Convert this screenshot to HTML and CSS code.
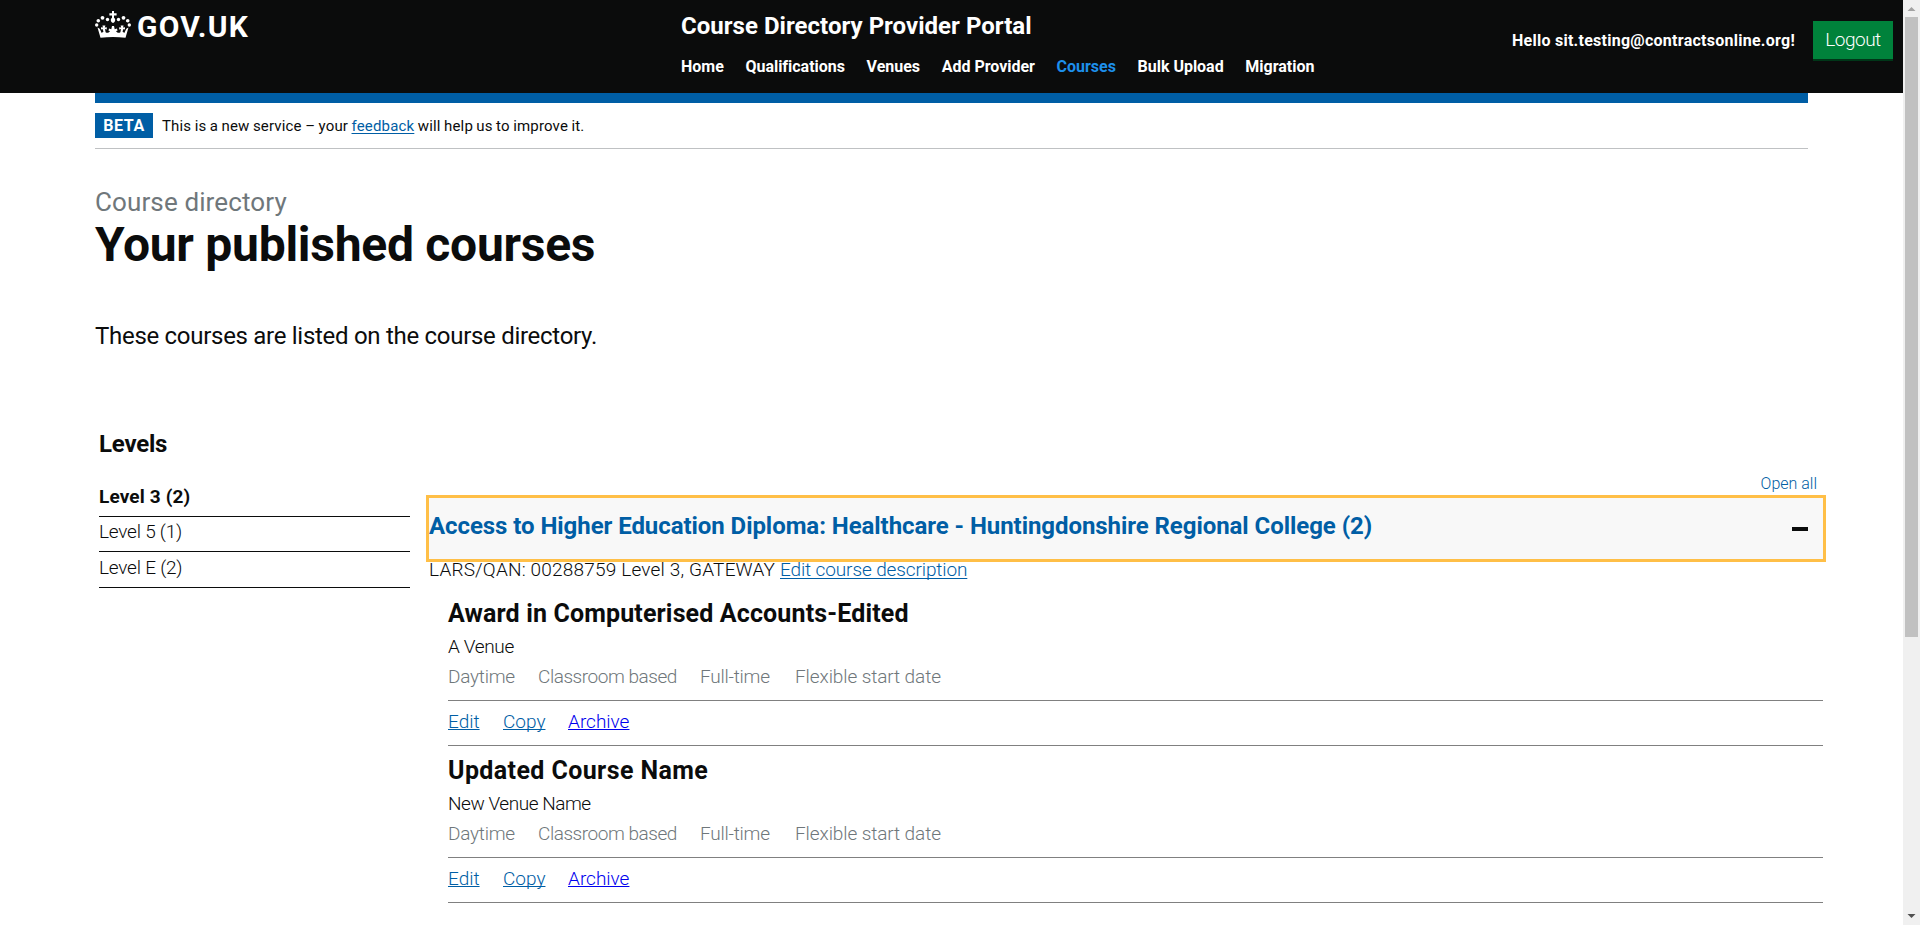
FILE: index.html
```html
<!DOCTYPE html>
<html lang="en">
<head>
<meta charset="utf-8">
<title>Your published courses</title>
<link rel="stylesheet" href="styles.css">
</head>
<body>
<div class="page">
  <header class="header">
    <a class="logo">
      <svg class="crown" viewBox="0 0 36 27" width="36" height="27" fill="#fff">
        <path d="M17 0h2v2.200h2.600v2.200H19v2.400c1.800 1.200 1.600 3.400-.2 5h-1.600c-1.800-1.600-2-3.800-.2-5V4.400h-2.600V2.200H17z"/>
        <circle cx="12.500" cy="8.500" r="1.700"/><circle cx="23.500" cy="8.500" r="1.700"/>
        <circle cx="7.500" cy="6.800" r="1.900"/><circle cx="28.500" cy="6.800" r="1.900"/>
        <circle cx="3.300" cy="9.800" r="1.800"/><circle cx="32.700" cy="9.800" r="1.800"/>
        <circle cx="1.700" cy="14" r="1.700"/><circle cx="34.300" cy="14" r="1.700"/>
        <path d="M2.500 16.500l2.200 1.200 2 4.300 1.800-1.500-1-2.500-1.500.5v-2.200l2 .3-.6-2h3l-.6 2 2-.3v2.200l-1.800-.5.600 3.200c1.500 1.300 3.600.6 4.400-1.200l-1.500-.2.500-2.300 2.300.8.700-3.300h2l.7 3.300 2.300-.8.500 2.300-1.500.2c.8 1.800 2.900 2.500 4.400 1.200l.6-3.200-1.800.5v-2.200l2 .3-.6-2h3l-.6 2 2-.3v2.200l-1.500-.5-1 2.500 1.800 1.500 2-4.300 2.200-1.200-3 10.300C22 25.600 14 25.600 5.500 26.800z"/>
      </svg>
      <span class="logo-text">GOV.UK</span>
    </a>
    <div class="service">
      <div class="service-name">Course Directory Provider Portal</div>
      <nav class="nav"><a>Home</a><a>Qualifications</a><a>Venues</a><a>Add Provider</a><a class="active">Courses</a><a>Bulk Upload</a><a>Migration</a></nav>
    </div>
    <div class="user">
      <span class="hello">Hello sit.testing@contractsonline.org!</span>
      <a class="logout">Logout</a>
    </div>
  </header>
  <div class="container">
    <div class="bar"></div>
    <div class="phase">
      <strong class="tag">BETA</strong>
      <span class="phase-text">This is a new service – your <a class="link">feedback</a> will help us to improve it.</span>
    </div>
    <div class="caption">Course directory</div>
    <h1 class="title">Your published courses</h1>
    <p class="lead">These courses are listed on the course directory.</p>
    <div class="columns">
      <aside class="levels">
        <h2 class="levels-title">Levels</h2>
        <ul class="levels-list">
          <li class="level current">Level 3 (2)</li>
          <li class="level">Level 5 (1)</li>
          <li class="level last">Level E (2)</li>
        </ul>
      </aside>
      <section class="courses">
        <a class="open-all">Open all</a>
        <div class="accordion">
          <h2 class="accordion-title">Access to Higher Education Diploma: Healthcare - Huntingdonshire Regional College (2)</h2>
          <span class="minus"></span>
        </div>
        <div class="summary"><span class="lars">LARS/QAN: 00288759 Level 3, GATEWAY</span><a class="link">Edit course description</a></div>
        <article class="course">
          <h3 class="course-title">Award in Computerised Accounts-Edited</h3>
          <div class="venue short">A Venue</div>
          <div class="tags"><span>Daytime</span><span class="tight">Classroom based</span><span>Full-time</span><span class="wide">Flexible start date</span></div>
          <div class="actions"><a class="link">Edit</a><a class="link">Copy</a><a class="link archive">Archive</a></div>
        </article>
        <article class="course">
          <h3 class="course-title loose">Updated Course Name</h3>
          <div class="venue">New Venue Name</div>
          <div class="tags"><span>Daytime</span><span class="tight">Classroom based</span><span>Full-time</span><span class="wide">Flexible start date</span></div>
          <div class="actions"><a class="link">Edit</a><a class="link">Copy</a><a class="link archive">Archive</a></div>
        </article>
      </section>
    </div>
  </div>
</div>
<div class="scrollbar">
  <svg width="17" height="17"><path fill="#a3a3a3" d="M8.500 7l4 4h-8z"/></svg>
  <div class="thumb"></div>
  <svg class="down" width="17" height="17"><path fill="#505050" d="M8.500 10l4-4h-8z"/></svg>
</div>
</body>
</html>
```

FILE: styles.css
```css
* { box-sizing: border-box; }
body {
  margin: 0;
  height: 925px;
  overflow: hidden;
  display: flex;
  background: #fff;
  color: #0b0c0c;
  font-family: Roboto, "Liberation Sans", sans-serif;
}
h1, h2, h3, p, ul { margin: 0; padding: 0; }
.page { flex: 1; min-width: 0; height: 925px; overflow: hidden; }

.header { display: flex; height: 93px; padding: 11px 10px 0 95px; background: #0b0c0c; color: #fff; }
.logo { display: flex; width: 586px; }
.crown { flex: none; }
.logo-text { margin-left: 6px; font-size: 30px; line-height: 32px; font-weight: 700; letter-spacing: 1.2px; }
.service-name { font-size: 24px; line-height: 30px; font-weight: 700; letter-spacing: .03px; }
.nav { display: flex; gap: 21.7px; margin-top: 16px; font-size: 16px; line-height: 20px; font-weight: 700; letter-spacing: -.02px; }
.nav .active { color: #1d8feb; }
.user { display: flex; align-items: flex-start; gap: 18px; margin-left: auto; padding-top: 10px; }
.hello { font-size: 16px; line-height: 40px; font-weight: 700; letter-spacing: .26px; }
.logout { width: 80px; height: 38px; background: #00823b; box-shadow: 0 2px 0 #003618; font-size: 19px; line-height: 37px; font-weight: 300; letter-spacing: -.5px; text-align: center; }

.container { padding: 0 95px; }
.bar { height: 10px; background: #005ea5; }
.phase { display: flex; gap: 9px; height: 46px; padding: 10px 0; border-bottom: 1px solid #bfc1c3; }
.tag { width: 58px; height: 25px; background: #005ea5; color: #fff; font-size: 16px; line-height: 25px; letter-spacing: .6px; text-align: center; }
.phase-text { font-size: 15px; line-height: 26px; letter-spacing: .17px; word-spacing: -.5px; }
.link { color: #005ea5; text-decoration: underline; text-decoration-thickness: 1px; text-underline-offset: 2px; text-decoration-skip-ink: none; }
.caption { margin-top: 38px; color: #6f777b; font-size: 26px; line-height: 30px; letter-spacing: .12px; }
.title { margin-top: 3px; font-size: 48px; line-height: 50px; font-weight: 700; letter-spacing: -.27px; }
.lead { margin-top: 51px; font-size: 24px; line-height: 30px; letter-spacing: -.29px; }

.columns { display: flex; margin: 78px -15px 0 4px; }
.levels { width: 311px; margin-right: 19px; }
.levels-title { font-size: 24px; line-height: 30px; letter-spacing: -.2px; }
.levels-list { margin-top: 26px; list-style: none; }
.level { padding: 3px 0 7px; border-bottom: 1px solid #0b0c0c; font-size: 19px; line-height: 24px; font-weight: 300; letter-spacing: -.22px; }
.level.current { padding: 0 0 7px; font-weight: 700; letter-spacing: .15px; }
.level.last { padding: 4px 0 7px; }

.courses { flex: 1; padding-top: 45px; }
.open-all { display: block; margin-bottom: 4px; padding-right: 6px; color: #005ea5; font-size: 16px; line-height: 20px; text-align: right; font-weight: 300; }
.accordion { display: flex; align-items: center; justify-content: space-between; height: 61px; padding-right: 15px; background: #f8f8f8; outline: 3px solid #ffbf47; }
.accordion-title { margin-top: -6px; color: #005ea5; font-size: 24px; line-height: 30px; letter-spacing: -.06px; }
.minus { width: 16px; height: 4px; margin-top: 1px; background: #0b0c0c; }
.summary { display: flex; height: 30px; font-size: 19px; line-height: 21px; font-weight: 300; }
.lars { width: 351px; letter-spacing: .18px; }
.summary .link { letter-spacing: -.12px; }

.course { margin-left: 19px; padding-top: 10px; border-bottom: 1px solid #808080; font-size: 19px; line-height: 24px; font-weight: 300; }
.course-title { font-size: 25px; line-height: 30px; font-weight: 700; letter-spacing: .14px; }
.course-title.loose { letter-spacing: .4px; }
.venue { margin-top: 6px; letter-spacing: -.46px; }
.venue.short { letter-spacing: -.35px; }
.tags { display: grid; grid-template-columns: 90px 162px 95px auto; padding: 6px 0 11px; border-bottom: 1px solid #808080; color: #6f777b; letter-spacing: -.25px; }
.tags .tight { letter-spacing: -.46px; }
.tags .wide { letter-spacing: -.1px; }
.actions { display: grid; grid-template-columns: 55px 65px auto; justify-items: start; padding: 9px 0 11px; }
.actions .link { text-underline-offset: 1px; }
.actions .archive { color: #0000ee; }

.scrollbar { display: flex; flex-direction: column; width: 17px; height: 925px; background: #f0f0f0; }
.thumb { width: 13px; height: 620px; margin-left: 2px; background: #c1c1c1; }
.down { margin-top: auto; }
```
